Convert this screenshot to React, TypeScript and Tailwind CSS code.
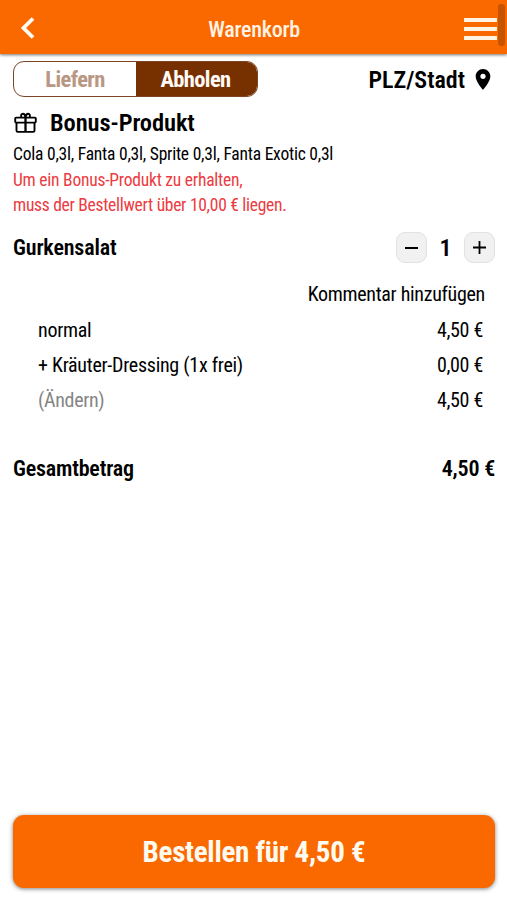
import { useState } from "react";

const toppings = [
    { label: "normal", price: "4,50 €" },
    { label: "+ Kräuter-Dressing (1x frei)", price: "0,00 €" },
];

function Header() {
    return (
        <header className="relative flex h-[54px] shrink-0 items-center justify-between bg-[#fa6900] shadow-[0_1px_3px_rgba(0,0,0,0.55)]">
            <button className="ml-[20px] mt-[2px] cursor-pointer" aria-label="Zurück">
                <svg width="16" height="24" viewBox="0 0 16 24" fill="none" stroke="#fffaf2" strokeWidth="3.8">
                    <path d="M13 2.5 3.5 12 13 21.5" />
                </svg>
            </button>
            <h1 className="ml-[8px] mt-[4px] text-[22px] font-medium tracking-[-0.25px] text-[#fff3e4]">Warenkorb</h1>
            <button className="mr-[10px] mt-[3px] flex w-[33px] cursor-pointer flex-col gap-[5px]" aria-label="Menü">
                <span className="h-1 bg-[#fff3e4]" />
                <span className="h-1 bg-[#fff3e4]" />
                <span className="h-1 bg-[#fff3e4]" />
            </button>
            {/* Scrollbar thumb */}
            <span className="absolute right-[2px] top-[4px] h-[42px] w-[7px] rounded-[3px] bg-[#c75400]" />
        </header>
    );
}

export default function App() {
    const [count, setCount] = useState(1);

    return (
        <div className="flex h-[900px] w-[507px] flex-col overflow-hidden bg-white font-['Roboto_Condensed','Roboto',sans-serif] text-black [font-stretch:75%]">
            <Header />
            <main className="flex grow flex-col pl-[13px] pr-[12px]">
                <div className="mt-[7px] flex h-[36px] items-center justify-between">
                    <div className="flex h-full w-[245px] overflow-hidden rounded-[11px] border border-[#7d4526] text-[22.5px] font-bold leading-[34px] tracking-[-0.6px]">
                        <button className="w-[122px] cursor-pointer text-[#b99783]">Liefern</button>
                        <button className="grow cursor-pointer bg-[#773000] pr-[2px] text-[#fffaf5]">Abholen</button>
                    </div>
                    <div className="flex items-center gap-[10px] pr-[4px] pt-[2px] text-[24px] font-semibold">
                        PLZ/Stadt
                        <svg className="-mt-[2px]" width="16" height="21" viewBox="5 2 14 20" fill="currentColor">
                            <path d="M12 2C8.13 2 5 5.13 5 9c0 5.25 7 13 7 13s7-7.75 7-13c0-3.87-3.13-7-7-7zm0 9.5a2.5 2.5 0 0 1 0-5 2.5 2.5 0 0 1 0 5z" />
                        </svg>
                    </div>
                </div>

                <section className="mt-[9px]">
                    <h2 className="flex h-[34px] items-center text-[24.5px] font-semibold tracking-[-0.1px]">
                        <svg className="mr-[13px]" width="24" height="24" viewBox="0 0 24 24" fill="none" stroke="currentColor" strokeWidth="1.9">
                            <rect x="2.2" y="6.6" width="20.6" height="5" rx="1" />
                            <path d="M3.5 11.6v8q0 1.3 1.3 1.3h15.4q1.3 0 1.3-1.3v-8" />
                            <path d="M12.5 6.6v14.3" strokeWidth="2.3" />
                            <path d="M12.3 6.6C12.3 4 11.3 2.7 9.8 2.7S7.5 4.5 8.5 6.6M12.7 6.6C12.7 4 13.7 2.7 15.2 2.7s2.3 1.8 1.3 3.9" />
                        </svg>
                        Bonus-Produkt
                    </h2>
                    <div className="mt-[2px] text-[17.5px] leading-[25.6px] tracking-[-0.23px]">
                        <p>Cola 0,3l, Fanta 0,3l, Sprite 0,3l, Fanta Exotic 0,3l</p>
                        <p className="text-[#ec3b41]">
                            Um ein Bonus-Produkt zu erhalten,
                            <br />
                            <span className="tracking-[-0.28px]">muss der Bestellwert über 10,00 € liegen.</span>
                        </p>
                    </div>
                </section>

                <section className="mt-[12px] text-[20px] tracking-[-0.32px]">
                    <div className="flex h-[34px] items-center justify-between text-[22px] font-semibold tracking-[-0.15px]">
                        <h3>Gurkensalat</h3>
                        <div className="flex items-center">
                            <button
                                onClick={() => setCount(Math.max(1, count - 1))}
                                className="flex size-[31px] cursor-pointer items-center justify-center rounded-[9px] border border-[#e2e2e2] bg-[#f1f1f1]"
                                aria-label="Weniger"
                            >
                                <span className="h-[2px] w-[13px] bg-black" />
                            </button>
                            <span className="w-[37px] pt-[1px] text-center text-[24px]">{count}</span>
                            <button
                                onClick={() => setCount(count + 1)}
                                className="flex size-[31px] cursor-pointer items-center justify-center rounded-[9px] border border-[#e2e2e2] bg-[#f1f1f1]"
                                aria-label="Mehr"
                            >
                                <svg width="13" height="13" viewBox="0 0 13 13" stroke="black" strokeWidth="1.8">
                                    <path d="M6.5 0v13M0 6.5h13" />
                                </svg>
                            </button>
                        </div>
                    </div>
                    <div className="mt-[12px] flex h-[35px] items-center justify-end pr-[10px] tracking-[-0.3px]">
                        Kommentar hinzufügen
                    </div>
                    {toppings.map((t) => (
                        <div key={t.label} className="flex h-[35.5px] items-center justify-between pl-[25px] pr-[12px]">
                            <span className="tracking-[-0.27px]">{t.label}</span>
                            <span>{t.price}</span>
                        </div>
                    ))}
                    <div className="flex h-[35px] items-center justify-between pl-[25px] pr-[12px]">
                        <span className="text-[#858585]">(Ändern)</span>
                        <span>4,50 €</span>
                    </div>
                </section>

                <div className="mt-[33px] flex h-[36px] items-center justify-between text-[22px] font-semibold tracking-[-0.2px]">
                    <span>Gesamtbetrag</span>
                    <span>4,50 €</span>
                </div>

                <button className="mb-[12px] mt-auto h-[73px] w-full cursor-pointer rounded-[11px] bg-[#fa6900] pt-[3px] text-[29px] font-bold tracking-[-0.25px] text-[#fffaf0] shadow-[0_1px_4px_rgba(0,0,0,0.5)]">
                    Bestellen für 4,50 €
                </button>
            </main>
        </div>
    );
}
